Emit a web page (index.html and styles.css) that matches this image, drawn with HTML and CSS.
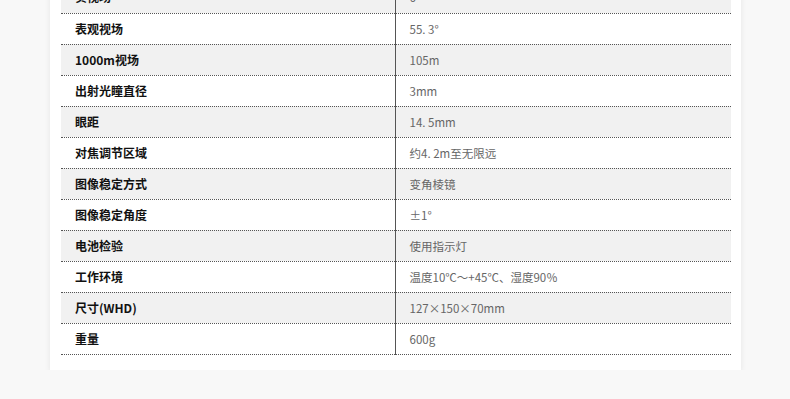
FILE: index.html
```html
<!DOCTYPE html>
<html lang="zh">
<head>
<meta charset="utf-8">
<link rel="stylesheet" href="styles.css">
</head>
<body>
<div class="page">
  <div class="card">
    <table class="spec">
      <tr class="alt"><th>实视场</th><td>6°</td></tr>
      <tr><th>表观视场</th><td>55. 3°</td></tr>
      <tr class="alt"><th>1000m视场</th><td>105m</td></tr>
      <tr><th>出射光瞳直径</th><td>3mm</td></tr>
      <tr class="alt"><th>眼距</th><td>14. 5mm</td></tr>
      <tr><th>对焦调节区域</th><td>约4. 2m至无限远</td></tr>
      <tr class="alt"><th>图像稳定方式</th><td>变角棱镜</td></tr>
      <tr><th>图像稳定角度</th><td>±1°</td></tr>
      <tr class="alt"><th>电池检验</th><td>使用指示灯</td></tr>
      <tr><th>工作环境</th><td>温度10℃～+45℃、湿度90％</td></tr>
      <tr class="alt"><th>尺寸(WHD)</th><td>127×150×70mm</td></tr>
      <tr><th>重量</th><td>600g</td></tr>
    </table>
  </div>
</div>
</body>
</html>
```
FILE: styles.css
```css
html, body {
  margin: 0;
  padding: 0;
  background: #f8f8f8;
  font-family: "Noto Sans CJK SC", "Noto Sans", sans-serif;
}
.page {
  padding-left: 50px;
  margin-top: -34px;
  width: 691px;
}
.card {
  background: #fff;
  padding: 16px 10px 15px 11px;
  box-shadow: 0 2px 6px rgba(0, 0, 0, 0.08);
}
.spec {
  width: 670px;
  border-collapse: collapse;
  border-spacing: 0;
}
.spec tr {
  height: 31px;
}
.spec tr.alt {
  background: #f1f1f1;
}
.spec th, .spec td {
  border-bottom: 1px dotted #555;
  padding: 0 14px;
  height: 30px;
  box-sizing: border-box;
  text-align: left;
  vertical-align: middle;
  font-size: 12px;
  line-height: 16px;
}
.spec th {
  width: 334px;
  font-weight: bold;
  color: #111;
}
.spec td {
  border-left: 1px solid #555;
  color: #666;
  font-size: 11.5px;
}
```
